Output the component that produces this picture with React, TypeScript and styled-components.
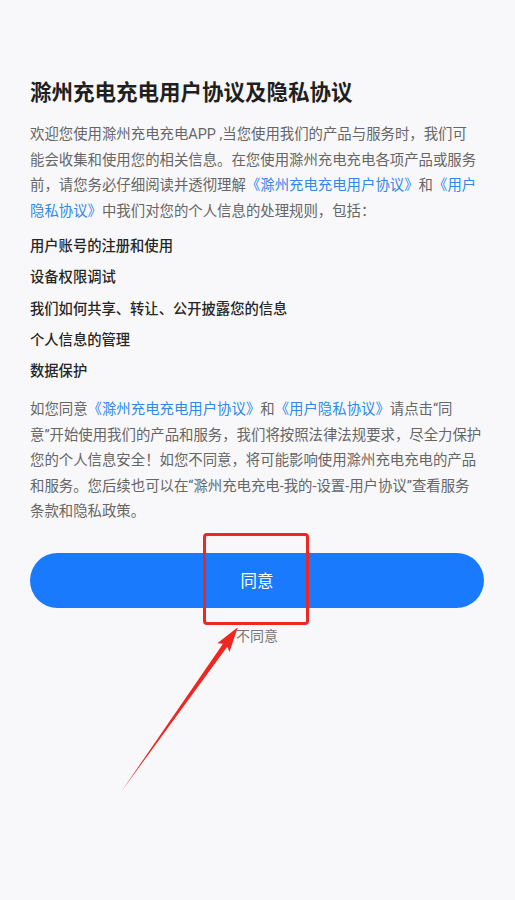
import React from 'react';
import styled, { createGlobalStyle } from 'styled-components';

const GlobalStyle = createGlobalStyle`
  html, body {
    margin: 0;
    padding: 0;
    background: #f8f8fa;
  }
  body {
    font-family: Roboto, "Noto Sans CJK SC", sans-serif;
  }
`;

const Page = styled.div`
  position: relative;
  width: 515px;
  min-height: 900px;
  box-sizing: border-box;
  padding: 78px 31px 0 30px;
  background: #f8f8fa;
  overflow: hidden;
`;

const Title = styled.h1`
  margin: 0;
  font-size: 21.5px;
  line-height: 30px;
  font-weight: 700;
  color: #1f1f1f;
  white-space: nowrap;
`;

const Paragraph = styled.p<{ $top: number }>`
  margin: ${(p) => p.$top}px 0 0;
  font-size: 14.4px;
  line-height: 25.5px;
  color: #666;
  white-space: nowrap;
`;

const Link = styled.span`
  color: #2f88ea;
`;

const TopicList = styled.ul`
  list-style: none;
  margin: 7px 0 0;
  padding: 0;
`;

const Topic = styled.li`
  font-size: 14.3px;
  line-height: 31.25px;
  font-weight: 500;
  color: #262626;
`;

const Actions = styled.div`
  margin-top: 28px;
  display: flex;
  flex-direction: column;
  align-items: center;
`;

const AgreeButton = styled.button`
  width: 454px;
  height: 55px;
  border: none;
  border-radius: 28px;
  background: #1a7afe;
  color: #fff;
  font-family: inherit;
  font-size: 16.5px;
  cursor: pointer;
  &:focus {
    outline: none;
  }
`;

const RefuseButton = styled.button`
  margin-top: 18px;
  background: transparent;
  border: none;
  padding: 0;
  font-family: inherit;
  font-size: 14px;
  line-height: 20px;
  color: #777;
  cursor: pointer;
`;

const HighlightBox = styled.div`
  position: absolute;
  left: 203px;
  top: 533px;
  width: 106px;
  height: 92px;
  box-sizing: border-box;
  border: 3.5px solid #ee2721;
  border-radius: 4px;
  pointer-events: none;
`;

const ArrowLayer = styled.svg`
  position: absolute;
  left: 0;
  top: 0;
  pointer-events: none;
`;

const topics = [
  '用户账号的注册和使用',
  '设备权限调试',
  '我们如何共享、转让、公开披露您的信息',
  '个人信息的管理',
  '数据保护',
];

const AnnotationArrow = () => {
  const L = 202;
  return (
    <ArrowLayer width={515} height={900} viewBox="0 0 515 900">
      <g transform="translate(121 792) rotate(-54.66)">
        <polygon
          fill="#ee2721"
          points={`0,0 ${L - 22},-2.6 ${L - 25},-7.5 ${L},0 ${L - 25},7.5 ${L - 22},2.6`}
        />
      </g>
    </ArrowLayer>
  );
};

const App = () => (
  <Page>
    <GlobalStyle />
    <Title>滁州充电充电用户协议及隐私协议</Title>
    <Paragraph $top={14}>
      欢迎您使用滁州充电充电APP ,当您使用我们的产品与服务时，我们可
      <br />
      能会收集和使用您的相关信息。在您使用滁州充电充电各项产品或服务
      <br />
      前，请您务必仔细阅读并透彻理解<Link>《滁州充电充电用户协议》</Link>和<Link>《用户</Link>
      <br />
      <Link>隐私协议》</Link>中我们对您的个人信息的处理规则，包括：
    </Paragraph>
    <TopicList>
      {topics.map((topic) => (
        <Topic key={topic}>{topic}</Topic>
      ))}
    </TopicList>
    <Paragraph $top={10}>
      如您同意<Link>《滁州充电充电用户协议》</Link>和<Link>《用户隐私协议》</Link>请点击“同
      <br />
      意”开始使用我们的产品和服务，我们将按照法律法规要求，尽全力保护
      <br />
      您的个人信息安全！如您不同意，将可能影响使用滁州充电充电的产品
      <br />
      和服务。您后续也可以在“滁州充电充电-我的-设置-用户协议”查看服务
      <br />
      条款和隐私政策。
    </Paragraph>
    <Actions>
      <AgreeButton>同意</AgreeButton>
      <RefuseButton>不同意</RefuseButton>
    </Actions>
    <HighlightBox />
    <AnnotationArrow />
  </Page>
);

export default App;
